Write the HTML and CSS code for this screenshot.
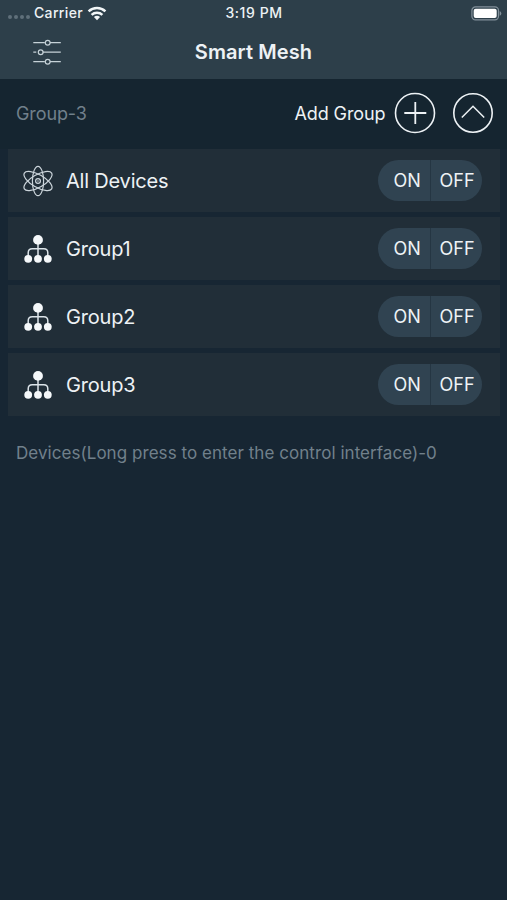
FILE: index.html
```html
<!DOCTYPE html>
<html lang="en">
<head>
<meta charset="utf-8">
<title>Smart Mesh</title>
<link rel="stylesheet" href="styles.css">
</head>
<body>
<svg class="defs" width="0" height="0">
  <symbol id="atom" viewBox="0 0 32 32">
    <g fill="none" stroke="#ccd5db" stroke-width="1.200">
      <ellipse cx="16" cy="16" rx="5.600" ry="14.700"/>
      <ellipse cx="16" cy="16" rx="6.300" ry="15.800" transform="rotate(60 16 16)"/>
      <ellipse cx="16" cy="16" rx="6.300" ry="15.800" transform="rotate(-60 16 16)"/>
      <circle cx="16" cy="16" r="2.400"/>
    </g>
    <circle cx="16" cy="16" r=".7" fill="#dce4ea"/>
  </symbol>
  <symbol id="tree" viewBox="0 0 32 32">
    <path d="M16 8v17M6.200 25v-5.200q0-4 4-4h11.600q4 0 4 4v5.200" fill="none" stroke="#dce4e9" stroke-width="1.500"/>
    <g fill="#f5f8fa"><circle cx="16" cy="6.900" r="4.900"/><circle cx="6.200" cy="25.800" r="3.900"/><circle cx="16" cy="25.800" r="3.900"/><circle cx="25.800" cy="25.800" r="3.900"/></g>
  </symbol>
</svg>
<header class="top">
  <div class="status">
    <div class="carrier">
      <span class="dots"><i></i><i></i><i></i><i></i></span>
      <span class="carrier-name">Carrier</span>
      <svg class="wifi" width="20" height="15" viewBox="0 0 20 15">
        <g fill="none" stroke="#f2f6f8" stroke-width="2.500"><path d="M1.600 5.300a12.200 12.200 0 0 1 16.800 0"/><path d="M4.600 8.800a7.900 7.900 0 0 1 10.800 0"/></g>
        <path d="M6.900 11.100a4.600 4.600 0 0 1 6.200 0L10 14.300z" fill="#f2f6f8"/>
      </svg>
    </div>
    <span class="time">3:19 PM</span>
    <svg class="battery" width="31" height="15" viewBox="0 0 31 15">
      <rect x=".9" y=".9" width="26.600" height="13" rx="3.600" fill="none" stroke="#82909a" stroke-width="1.200"/>
      <rect x="2.700" y="2.700" width="23" height="9.400" rx="2" fill="#fff"/>
      <path d="M28.700 5q1.600.6 1.600 2.400t-1.600 2.400z" fill="#82909a"/>
    </svg>
  </div>
  <nav class="nav">
    <svg class="sliders" width="30" height="28" viewBox="0 0 30 28">
      <g fill="none" stroke="#c6d2d8" stroke-width="1.200">
        <path d="M1.300 4.700h11.500M18 4.700h10.800M1.300 14.200h3M10.700 14.200h18.100M1.300 23.700h11.500M18 23.700h10.800"/>
        <circle cx="15.700" cy="4.700" r="2.400"/><circle cx="8.700" cy="14.200" r="2.400"/><circle cx="15.700" cy="23.700" r="2.400"/>
      </g>
    </svg>
    <h1 class="title">Smart Mesh</h1>
  </nav>
</header>
<main>
  <section class="groupbar">
    <span class="muted group-count">Group-3</span>
    <span class="add-label">Add Group</span>
    <svg class="round add" width="42" height="42" viewBox="0 0 42 42"><g fill="none" stroke="#edf2f5"><circle cx="21" cy="21" r="19.500" stroke-width="1.600"/><path d="M10.300 21h22M21.300 10v22" stroke-width="1.800"/></g></svg>
    <svg class="round" width="42" height="42" viewBox="0 0 42 42"><g fill="none" stroke="#edf2f5"><circle cx="21" cy="21" r="19.200" stroke-width="1.600"/><path d="M9.800 25.500L21 14.300 32.200 25.500" stroke-width="1.500"/></g></svg>
  </section>
  <ul class="list">
    <li class="row"><svg class="icon"><use href="#atom"/></svg><span class="name">All Devices</span><div class="switch"><span class="on">ON</span><span class="off">OFF</span></div></li>
    <li class="row"><svg class="icon"><use href="#tree"/></svg><span class="name">Group1</span><div class="switch"><span class="on">ON</span><span class="off">OFF</span></div></li>
    <li class="row"><svg class="icon"><use href="#tree"/></svg><span class="name">Group2</span><div class="switch"><span class="on">ON</span><span class="off">OFF</span></div></li>
    <li class="row"><svg class="icon"><use href="#tree"/></svg><span class="name">Group3</span><div class="switch"><span class="on">ON</span><span class="off">OFF</span></div></li>
  </ul>
  <p class="muted devices">Devices(Long press to enter the control interface)-0</p>
</main>
</body>
</html>
```
FILE: styles.css
```css
* { box-sizing: border-box; }
body {
  margin: 0;
  height: 900px;
  overflow: hidden;
  background: #172633;
  color: #edf2f5;
  font-family: Inter, "Liberation Sans", sans-serif;
  white-space: nowrap;
}
svg { display: block; flex: none; }
.defs { position: absolute; }
.top { height: 79px; background: #2d3f4a; }
.status {
  display: grid;
  grid-template-columns: 1fr auto 1fr;
  height: 26px;
  padding: 0 5px 0 8px;
  align-items: center;
  font-size: 14px;
  font-weight: 500;
  letter-spacing: .35px;
}
.carrier { display: flex; align-items: center; }
.dots { display: flex; gap: 2px; width: 26px; padding-top: 8px; }
.dots i { width: 4px; height: 4px; border-radius: 50%; background: #5f707a; }
.carrier-name { width: 53px; padding-bottom: 1px; }
.time { padding: 0 2px 1px 0; letter-spacing: .55px; }
.battery { justify-self: end; }
.nav {
  display: grid;
  grid-template-columns: 1fr auto 1fr;
  height: 53px;
  padding-bottom: 2px;
  align-items: center;
}
.sliders { margin-left: 32px; }
.title { margin: 0; font-size: 20px; font-weight: 600; letter-spacing: .1px; }
.groupbar {
  display: flex;
  align-items: center;
  height: 70px;
  padding: 0 13.5px 2px 16px;
  background: #152530;
}
.muted { color: #71808b; }
.group-count { margin-right: auto; font-size: 18px; letter-spacing: -.1px; }
.add-label { font-size: 18px; margin-right: 8px; letter-spacing: -.1px; }
.add { margin-right: 16px; }
.list { list-style: none; margin: 0; padding: 0 7px 0 8px; display: grid; gap: 5px; }
.row {
  display: flex;
  align-items: center;
  height: 63px;
  padding: 0 18px 0 14px;
  background: #212e38;
}
.icon { width: 32px; height: 32px; margin-right: 12px; }
.name { font-size: 20px; margin-right: auto; letter-spacing: -.2px; }
.switch {
  display: flex;
  width: 104px;
  height: 41px;
  border-radius: 21px;
  overflow: hidden;
  background: #304351;
  font-size: 18px;
  line-height: 42px;
}
.on { width: 53px; padding-left: 15.5px; border-right: 1px solid #253643; }
.off { padding-left: 8.5px; }
.devices { margin: 27px 0 0 16px; font-size: 17px; line-height: 20px; letter-spacing: .05px; }
```
